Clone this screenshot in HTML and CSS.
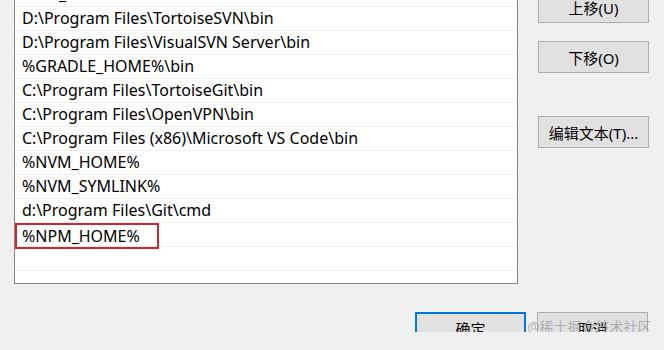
FILE: index.html
```html
<!DOCTYPE html>
<html>
<head>
  <meta charset="UTF-8">
  <title>编辑环境变量</title>
  <link rel="stylesheet" href="styles.css">
</head>
<body>
  <div class="dialog">
    <div class="top">
      <ul class="pathlist">
        <li>%M2_HOME%\bin</li>
        <li>D:\Program Files\TortoiseSVN\bin</li>
        <li>D:\Program Files\VisualSVN Server\bin</li>
        <li>%GRADLE_HOME%\bin</li>
        <li>C:\Program Files\TortoiseGit\bin</li>
        <li>C:\Program Files\OpenVPN\bin</li>
        <li>C:\Program Files (x86)\Microsoft VS Code\bin</li>
        <li>%NVM_HOME%</li>
        <li>%NVM_SYMLINK%</li>
        <li>d:\Program Files\Git\cmd</li>
        <li><span class="editing">%NPM_HOME%</span></li>
        <li></li>
      </ul>

      <div class="side">
        <button class="btn">上移(U)</button>
        <button class="btn">下移(O)</button>
        <button class="btn btn-edit">编辑文本(T)...</button>
      </div>
    </div>

    <div class="footer">
      <button class="btn btn-default">确定</button>
      <div class="cancel-wrap">
        <button class="btn">取消</button>
        <span class="watermark">@稀土掘金技术社区</span>
      </div>
    </div>
  </div>
</body>
</html>
```

FILE: styles.css
```css
body {
  margin: 0;
  background: #f0f0f0;
  font-family: "Noto Sans", "Noto Sans CJK SC", sans-serif;
  font-size: 16px;
  color: #000;
  overflow: hidden;
}
.dialog {
  width: 664px;
  height: 350px;
}
.top {
  display: flex;
  align-items: flex-start;
  margin-top: -18px;
}
.pathlist {
  list-style: none;
  margin: 0 0 0 14px;
  padding: 0 0 12px 0;
  width: 502px;
  background: #fff;
  border: 1px solid #828790;
}
.pathlist li {
  height: 23px;
  border-bottom: 1px solid #f0f0f0;
  line-height: 23px;
  padding-left: 7px;
  white-space: nowrap;
}
.editing {
  display: block;
  width: 135px;
  height: 22px;
  margin-left: -7px;
  padding-left: 5px;
  line-height: 22px;
  border: 2px solid #d0282f;
}
.side {
  display: flex;
  flex-direction: column;
  margin-left: 20px;
  padding-top: 9px;
}
.btn {
  width: 111px;
  height: 32px;
  background: #e1e1e1;
  border: 1px solid #adadad;
  font-family: "Noto Sans", "Noto Sans CJK SC", sans-serif;
  font-size: 15px;
  color: #000;
  padding: 0;
}
.side .btn {
  margin-bottom: 18px;
}
.side .btn-edit {
  margin-top: 25px;
}
.footer {
  display: flex;
  margin-top: 28px;
  padding-left: 415px;
  gap: 11px;
}
.btn-default {
  border: 2px solid #0078d7;
}
.cancel-wrap {
  position: relative;
  height: 32px;
}
.watermark {
  position: absolute;
  left: -10px;
  top: 5px;
  font-size: 14px;
  line-height: 20px;
  color: rgba(150, 150, 150, 0.7);
  white-space: nowrap;
}
```
